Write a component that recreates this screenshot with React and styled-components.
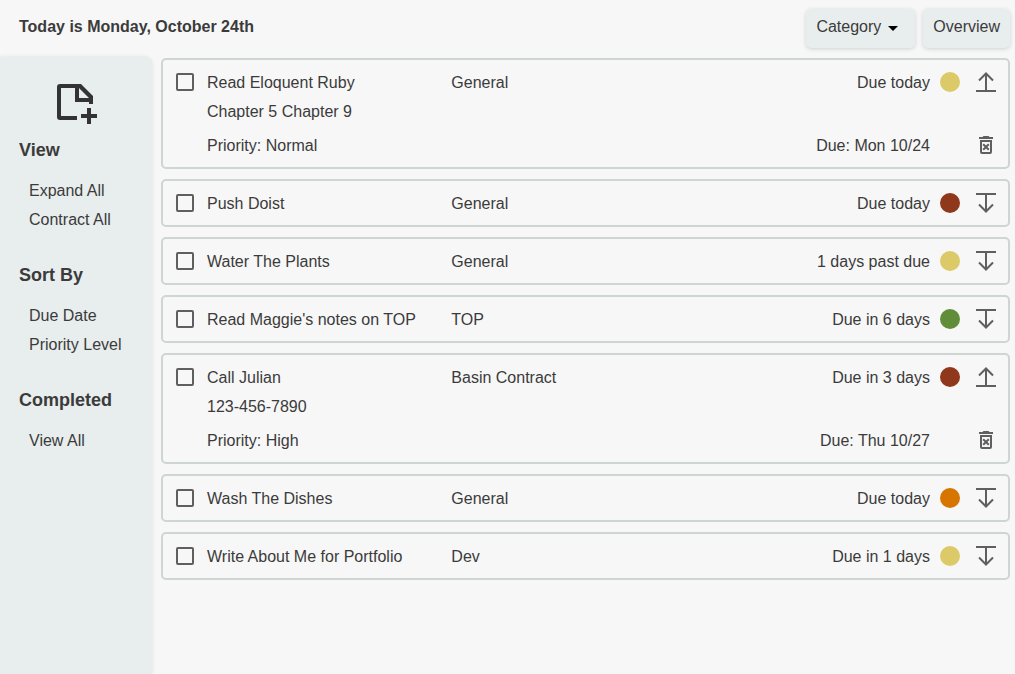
import React, { useState } from 'react';
import styled, { createGlobalStyle } from 'styled-components';

const GlobalStyle = createGlobalStyle`
  * {
    box-sizing: border-box;
  }

  body {
    margin: 0;
    background: #f7f7f7;
    color: #3b3b3b;
    font-family: "Liberation Sans", Arial, sans-serif;
    font-size: 16px;
    line-height: 24px;
  }
`;

const Page = styled.div`
  display: flex;
  flex-direction: column;
  min-height: 100vh;
`;

const Header = styled.header`
  display: flex;
  align-items: center;
  justify-content: space-between;
  padding: 9px 5px 9px 19px;
`;

const Today = styled.h1`
  margin: 0;
  padding-bottom: 4px;
  font-size: 16px;
  line-height: 24px;
`;

const HeaderButtons = styled.div`
  display: flex;
  gap: 8px;
`;

const HeaderButton = styled.button`
  display: flex;
  align-items: center;
  gap: 7px;
  padding: 6px 10px 9px;
  border: none;
  border-radius: 5px;
  background: #e8eded;
  box-shadow: 0 1px 4px rgba(0, 0, 0, 0.16);
  color: inherit;
  font: inherit;
  cursor: pointer;
`;

const Caret = styled.span`
  margin: 3px 7px 0 0;
  border: 5px solid transparent;
  border-top-color: #000;
  border-bottom: none;
`;

const Body = styled.div`
  display: flex;
  flex: 1;
  gap: 9px;
  padding-right: 5px;
`;

const Sidebar = styled.nav`
  flex: 0 0 152px;
  padding: 27px 17px 27px 19px;
  border-radius: 0 8px 0 0;
  background: #e8eded;
  box-shadow: 0 0 4px rgba(0, 0, 0, 0.1);
`;

const NewTask = styled.button`
  display: block;
  width: 40px;
  height: 40px;
  margin: 0 auto 14px;
  padding: 0;
  border: none;
  background: none;
  color: #333;
  cursor: pointer;
`;

const SideTitle = styled.h2`
  margin: 0 0 17px;
  font-size: 18px;
  line-height: 24px;
`;

const SideList = styled.ul`
  display: flex;
  flex-direction: column;
  gap: 5px;
  margin: 0 0 31px;
  padding: 0 0 0 10px;
  list-style: none;
`;

const SideButton = styled.button`
  display: block;
  padding: 0;
  border: none;
  background: none;
  color: inherit;
  font: inherit;
  white-space: nowrap;
  cursor: pointer;
`;

const Tasks = styled.main`
  display: flex;
  flex: 1;
  flex-direction: column;
  gap: 10px;
  padding: 1px 0 10px;
`;

const Card = styled.article`
  display: grid;
  grid-template-columns: 24px repeat(3, minmax(0, 1fr)) 24px 24px;
  grid-template-rows: 24px;
  gap: 5px 10px;
  padding: 10px;
  border: 2px solid #ced5d3;
  border-radius: 5px;
  line-height: 26px;
`;

const Check = styled.input`
  appearance: none;
  width: 18px;
  height: 18px;
  margin: 3px;
  border: 2px solid #5f5f5f;
  border-radius: 2px;
  cursor: pointer;

  &:checked {
    background: #5f5f5f;
  }
`;

const Due = styled.span`
  text-align: right;
`;

const Dot = styled.span`
  align-self: center;
  width: 20px;
  height: 20px;
  border-radius: 50%;
  background: ${({ $color }) => $color};
`;

const Notes = styled.p`
  grid-column: 2 / 5;
  height: 24px;
  margin: 0;
`;

const Priority = styled.span`
  grid-column: 2;
  height: 24px;
  margin-top: 5px;
`;

const DueDate = styled(Due)`
  grid-column: 4;
  height: 24px;
  margin-top: 5px;
`;

const IconButton = styled.button`
  grid-column: 6;
  display: flex;
  align-items: center;
  justify-content: center;
  height: 24px;
  padding: 0;
  border: none;
  background: none;
  color: #5f5f5f;
  cursor: pointer;
`;

const DeleteButton = styled(IconButton)`
  margin-top: 5px;
`;

const NewFileIcon = () => (
  <svg width="40" height="40" viewBox="0 0 40 40" fill="currentColor" aria-hidden="true">
    <path
      fillRule="evenodd"
      d="M3 0H24L36 12V20H32V18H18V4H4V32H20V36H3A3 3 0 0 1 0 33V3A3 3 0 0 1 3 0ZM22 4V14H32Z"
    />
    <path d="M30 24H34V30H40V34H34V40H30V34H24V30H30Z" />
  </svg>
);

const ExpandIcon = () => (
  <svg width="20" height="20" viewBox="0 0 20 20" fill="none" stroke="currentColor" strokeWidth="2" aria-hidden="true">
    <path d="M0 1H20M10 1V18M3 11.5L10 18.5L17 11.5" />
  </svg>
);

const ContractIcon = () => (
  <svg width="20" height="20" viewBox="0 0 20 20" fill="none" stroke="currentColor" strokeWidth="2" aria-hidden="true">
    <path d="M0 19H20M10 19V2M3 8.5L10 1.5L17 8.5" />
  </svg>
);

const TrashIcon = () => (
  <svg width="24" height="24" viewBox="0 0 24 24" fill="currentColor" aria-hidden="true">
    <path d="M14.12 10.47L12 12.59L9.87 10.47L8.46 11.88L10.59 14L8.47 16.12L9.88 17.53L12 15.41L14.12 17.53L15.53 16.12L13.41 14L15.53 11.88L14.12 10.47M15.5 4L14.5 3H9.5L8.5 4H5V6H19V4H15.5M6 19A2 2 0 0 0 8 21H16A2 2 0 0 0 18 19V7H6V19M8 9H16V19H8V9Z" />
  </svg>
);

const colors = {
  Normal: '#dbca67',
  Medium: '#d67500',
  High: '#8f381b',
  Low: '#628d38',
};

const initialTasks = [
  { id: 1, title: 'Read Eloquent Ruby', notes: 'Chapter 5 Chapter 9', category: 'General', due: 'Due today', date: 'Mon 10/24', priority: 'Normal', open: true },
  { id: 2, title: 'Push Doist', category: 'General', due: 'Due today', date: 'Mon 10/24', priority: 'High' },
  { id: 3, title: 'Water The Plants', category: 'General', due: '1 days past due', date: 'Sun 10/23', priority: 'Normal' },
  { id: 4, title: "Read Maggie's notes on TOP", category: 'TOP', due: 'Due in 6 days', date: 'Sun 10/30', priority: 'Low' },
  { id: 5, title: 'Call Julian', notes: '123-456-7890', category: 'Basin Contract', due: 'Due in 3 days', date: 'Thu 10/27', priority: 'High', open: true },
  { id: 6, title: 'Wash The Dishes', category: 'General', due: 'Due today', date: 'Mon 10/24', priority: 'Medium' },
  { id: 7, title: 'Write About Me for Portfolio', category: 'Dev', due: 'Due in 1 days', date: 'Tue 10/25', priority: 'Normal' },
];

const Task = ({ task, onToggle, onDelete }) => (
  <Card>
    <Check type="checkbox" id={`task-${task.id}`} />
    <label htmlFor={`task-${task.id}`}>{task.title}</label>
    <span>{task.category}</span>
    <Due>{task.due}</Due>
    <Dot $color={colors[task.priority]} />
    <IconButton type="button" aria-label={task.open ? 'Contract' : 'Expand'} onClick={onToggle}>
      {task.open ? <ContractIcon /> : <ExpandIcon />}
    </IconButton>
    {task.open && (
      <>
        {task.notes && <Notes>{task.notes}</Notes>}
        <Priority>Priority: {task.priority}</Priority>
        <DueDate>Due: {task.date}</DueDate>
        <DeleteButton type="button" aria-label="Delete" onClick={onDelete}>
          <TrashIcon />
        </DeleteButton>
      </>
    )}
  </Card>
);

const App = () => {
  const [tasks, setTasks] = useState(initialTasks);

  const setAll = (open) => setTasks(tasks.map((t) => ({ ...t, open })));
  const toggle = (id) => setTasks(tasks.map((t) => (t.id === id ? { ...t, open: !t.open } : t)));
  const remove = (id) => setTasks(tasks.filter((t) => t.id !== id));

  return (
    <Page>
      <GlobalStyle />
      <Header>
        <Today>Today is Monday, October 24th</Today>
        <HeaderButtons>
          <HeaderButton type="button" aria-haspopup="menu">
            Category
            <Caret />
          </HeaderButton>
          <HeaderButton type="button">Overview</HeaderButton>
        </HeaderButtons>
      </Header>
      <Body>
        <Sidebar>
          <NewTask type="button" aria-label="New task">
            <NewFileIcon />
          </NewTask>
          <SideTitle>View</SideTitle>
          <SideList>
            <li><SideButton type="button" onClick={() => setAll(true)}>Expand All</SideButton></li>
            <li><SideButton type="button" onClick={() => setAll(false)}>Contract All</SideButton></li>
          </SideList>
          <SideTitle>Sort By</SideTitle>
          <SideList>
            <li><SideButton type="button">Due Date</SideButton></li>
            <li><SideButton type="button">Priority Level</SideButton></li>
          </SideList>
          <SideTitle>Completed</SideTitle>
          <SideList>
            <li><SideButton type="button">View All</SideButton></li>
          </SideList>
        </Sidebar>
        <Tasks>
          {tasks.map((task) => (
            <Task
              key={task.id}
              task={task}
              onToggle={() => toggle(task.id)}
              onDelete={() => remove(task.id)}
            />
          ))}
        </Tasks>
      </Body>
    </Page>
  );
};

export default App;
